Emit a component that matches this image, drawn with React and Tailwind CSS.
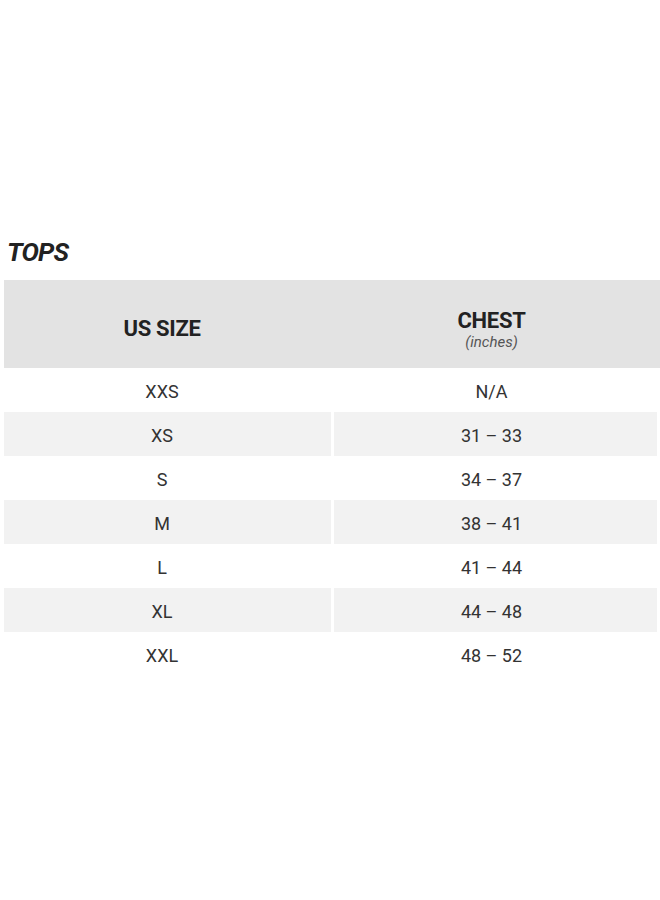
export default function App() {
  const rows = [
    ["XXS", "N/A"],
    ["XS", "31 – 33"],
    ["S", "34 – 37"],
    ["M", "38 – 41"],
    ["L", "41 – 44"],
    ["XL", "44 – 48"],
    ["XXL", "48 – 52"],
  ];
  return (
    <div className="w-[660px] h-[900px] bg-white" style={{ fontFamily: "Roboto, 'Noto Sans', sans-serif" }}>
      <div className="pt-[237px] pl-[7px] h-[280px]">
        <h1 className="text-[26px] leading-[30px] font-bold italic text-[#222] tracking-[-0.8px]">TOPS</h1>
      </div>
      <div className="ml-[4px]">
        <div className="flex h-[88px] bg-[#e3e3e3]">
          <div className="w-[327px] flex items-center justify-center pr-[11px] pt-[9px] text-[22px] font-bold text-[#222] tracking-[-0.3px]">US SIZE</div>
          <div className="w-[3px]" />
          <div className="flex-1 flex flex-col items-center justify-center pr-[11px] pt-[12px]">
            <div className="text-[22px] leading-[25px] font-bold text-[#222] tracking-[-0.3px]">CHEST</div>
            <div className="text-[15px] leading-[19px] italic text-[#555]">(inches)</div>
          </div>
        </div>
        {rows.map(([s, c], i) => {
          const bg = i % 2 === 1 ? "bg-[#f2f2f2]" : "bg-white";
          return (
            <div key={s} className="flex h-[44px] pr-[3px] text-[18px] text-[#333]">
              <div className={`w-[327px] flex items-center justify-center pr-[11px] pt-[3px] ${bg}`}>{s}</div>
              <div className="w-[3px]" />
              <div className={`flex-1 flex items-center justify-center pr-[8px] pt-[3px] ${bg}`}>{c}</div>
            </div>
          );
        })}
      </div>
    </div>
  );
}
